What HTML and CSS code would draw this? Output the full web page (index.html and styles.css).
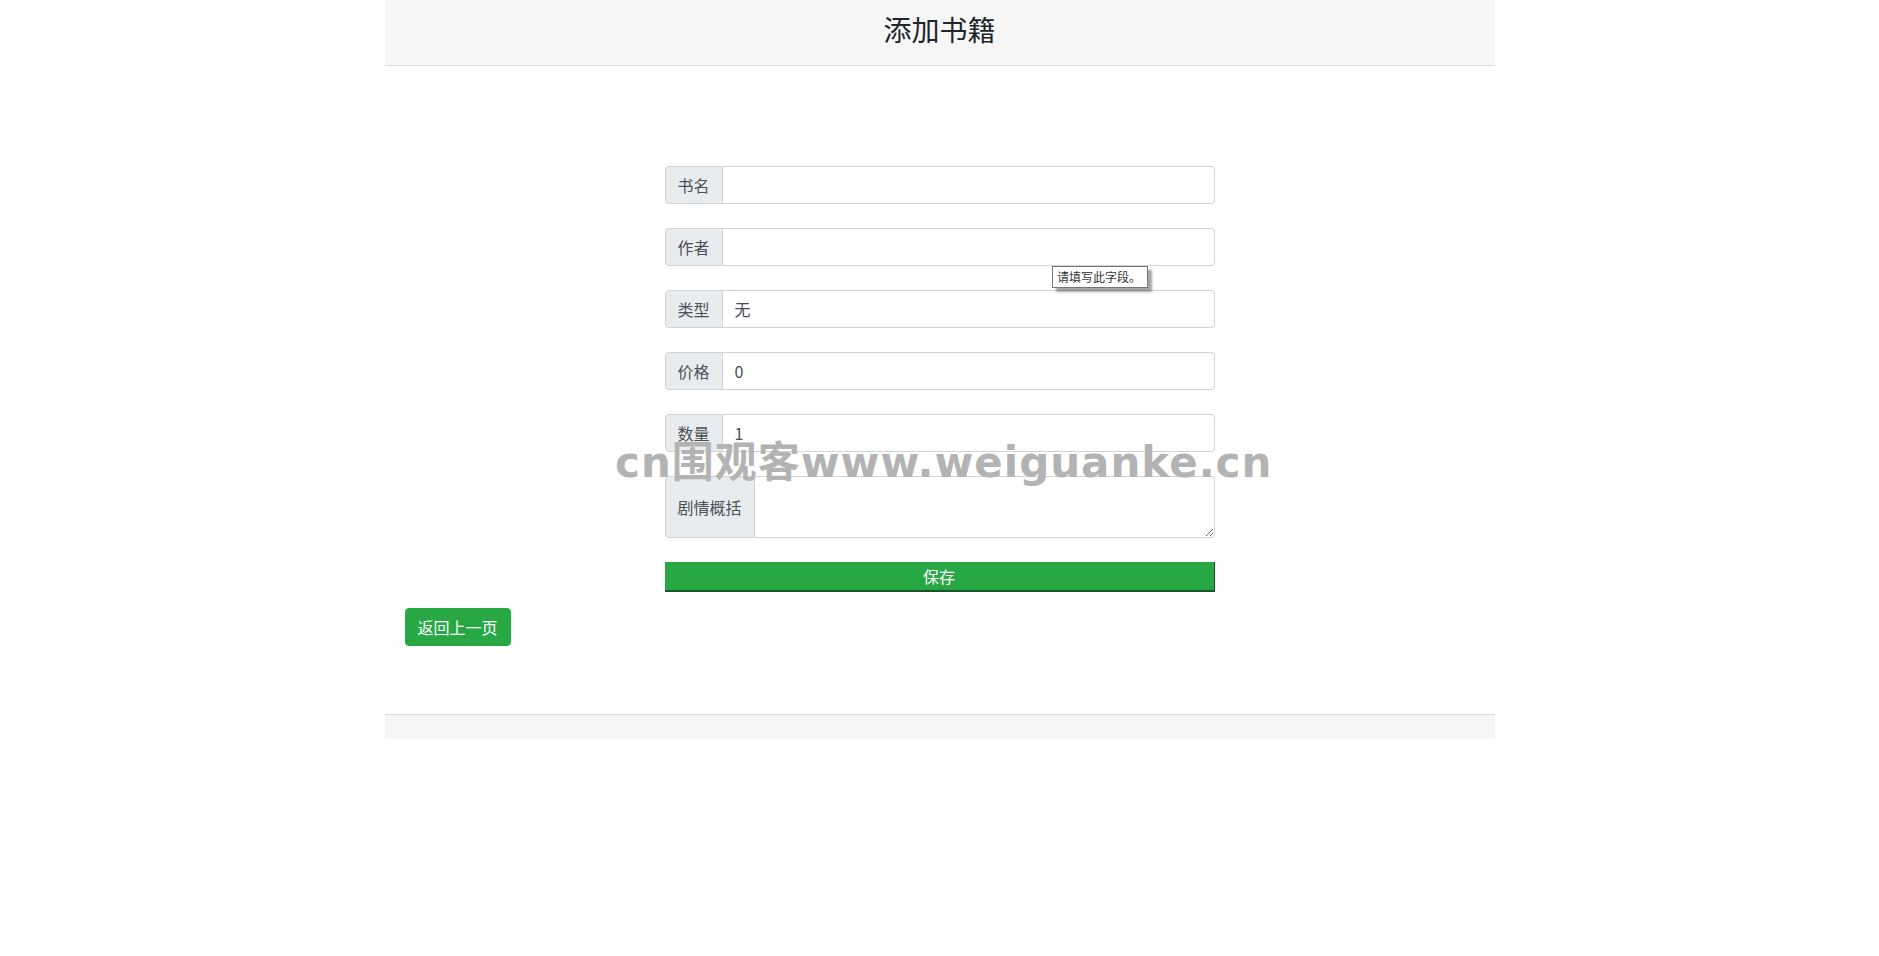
FILE: index.html
```html
<!DOCTYPE html>
<html lang="zh-CN">
<head>
<meta charset="utf-8">
<title>添加书籍</title>
<link rel="stylesheet" href="styles.css">
</head>
<body>
<div class="container">
  <div class="header">
    <h3 class="title">添加书籍</h3>
  </div>
  <div class="main">
    <form class="book-form">
      <div class="input-group">
        <span class="ig-label">书名</span>
        <input class="ig-input" type="text" value="">
      </div>
      <div class="input-group">
        <span class="ig-label">作者</span>
        <input class="ig-input" type="text" value="">
      </div>
      <div class="input-group">
        <span class="ig-label">类型</span>
        <input class="ig-input" type="text" value="无">
      </div>
      <div class="input-group">
        <span class="ig-label">价格</span>
        <input class="ig-input" type="text" value="0">
      </div>
      <div class="input-group">
        <span class="ig-label">数量</span>
        <input class="ig-input" type="text" value="1">
      </div>
      <div class="input-group">
        <span class="ig-label">剧情概括</span>
        <textarea class="ig-input ig-textarea" rows="2"></textarea>
      </div>
      <button class="btn-save" type="button">保存</button>
    </form>
    <div class="back-row">
      <button class="btn-back" type="button">返回上一页</button>
    </div>
  </div>
  <div class="footer"></div>
</div>
<div class="tooltip">请填写此字段。</div>
<div class="watermark">cn围观客www.weiguanke.cn</div>
</body>
</html>
```

FILE: styles.css
```css
body {
  margin: 0;
  font-family: "Noto Sans CJK SC", sans-serif;
  font-size: 16px;
  line-height: 1.5;
  color: #212529;
  background: #fff;
}

.container {
  width: 1110px;
  margin: 0 auto;
}

.header {
  height: 65px;
  background: #f6f6f6;
  border-bottom: 1px solid #dcdcdc;
  text-align: center;
}

.title {
  margin: 0;
  padding-top: 13px;
  font-size: 28px;
  font-weight: 400;
  line-height: 1.2;
  color: #212529;
}

.main {
  padding-top: 100px;
}

.book-form {
  width: 550px;
  margin: 0 auto;
}

.input-group {
  display: flex;
  margin-bottom: 24px;
}

.ig-label {
  display: flex;
  align-items: center;
  padding: 6px 12px;
  background: #e9ecef;
  border: 1px solid #ced4da;
  border-radius: 4px 0 0 4px;
  color: #495057;
  line-height: 24px;
  white-space: nowrap;
}

.ig-input {
  flex: 1;
  min-width: 0;
  height: 38px;
  box-sizing: border-box;
  margin: 0;
  padding: 6px 12px;
  border: 1px solid #ced4da;
  border-left: none;
  border-radius: 0 4px 4px 0;
  font-family: inherit;
  font-size: 16px;
  line-height: 24px;
  color: #495057;
  background: #fff;
  outline: none;
}

.ig-textarea {
  height: 62px;
  resize: vertical;
}

.btn-save {
  display: block;
  width: 100%;
  height: 30px;
  box-sizing: border-box;
  margin: 0;
  padding: 0;
  border: none;
  border-right: 1px solid #1a5727;
  border-bottom: 2px solid #1a5727;
  background: #28a745;
  color: #fff;
  font-family: inherit;
  font-size: 16px;
  line-height: 26px;
}

.back-row {
  margin-top: 16px;
  padding-left: 20px;
}

.btn-back {
  margin: 0;
  padding: 6px 12px;
  border: 1px solid #28a745;
  border-radius: 4px;
  background: #28a745;
  color: #fff;
  font-family: inherit;
  font-size: 16px;
  line-height: 24px;
}

.footer {
  margin-top: 68px;
  height: 24px;
  background: #f5f5f5;
  border-top: 1px solid #dcdcdc;
}

.tooltip {
  position: absolute;
  left: 1052px;
  top: 266px;
  width: 90px;
  height: 20px;
  padding-left: 4px;
  border: 1px solid #767676;
  background: #fff;
  box-shadow: 4px 4px 2px rgba(0, 0, 0, 0.35);
  font-size: 12px;
  line-height: 20px;
  color: #333;
  white-space: nowrap;
}

.watermark {
  position: absolute;
  left: 615px;
  top: 442px;
  font-family: "DejaVu Sans", "Noto Sans CJK SC", sans-serif;
  font-weight: bold;
  font-size: 42px;
  line-height: 42px;
  color: #b3b3b3;
  white-space: nowrap;
  letter-spacing: 1px;
}
```
